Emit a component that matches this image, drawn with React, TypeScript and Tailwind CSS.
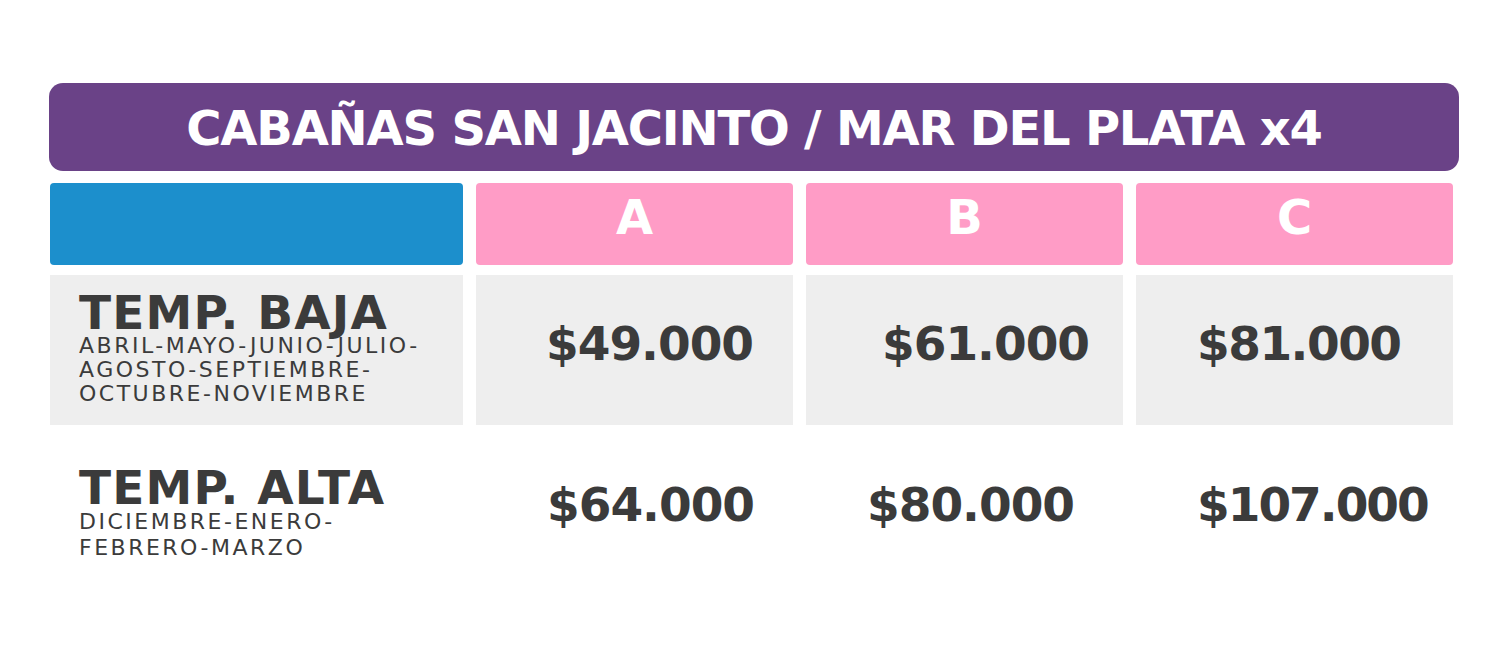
import React from "react";

const font = { fontFamily: '"DejaVu Sans", "Liberation Sans", sans-serif' };

export default function App() {
  return (
    <div className="w-[1504px] h-[645px] bg-white overflow-hidden" style={font}>
      <div className="pl-[49px] pt-[83px]">
        <div className="w-[1410px] h-[88px] bg-[#6a4287] rounded-[14px] flex items-center justify-center">
          <h1 className="text-white font-bold text-[48px] leading-none tracking-[-1.2px] pt-[1px]">
            CABAÑAS SAN JACINTO / MAR DEL PLATA x4
          </h1>
        </div>
        <div className="grid grid-cols-[413px_317px_317px_317px] gap-x-[13px] mt-[12px] ml-[1px] text-[#3b3b3b]">
          {/* header */}
          <div className="h-[82px] bg-[#1c8fcc] rounded-[4px]" />
          {["A", "B", "C"].map((l) => (
            <div key={l} className="h-[82px] bg-[#ff9cc6] rounded-[4px] flex items-center justify-center">
              <span className="text-white font-bold text-[48px] leading-none pb-[14px]">{l}</span>
            </div>
          ))}

          {/* row 1 */}
          <div className="mt-[10px] h-[150px] bg-[#eeeeee] pl-[29px] pt-[18px]">
            <div className="font-bold text-[47px] leading-[40px] tracking-[1.2px]">TEMP. BAJA</div>
            <div className="text-[22px] leading-[24px] tracking-[2.5px] mt-[1px]">
              ABRIL-MAYO-JUNIO-JULIO-
              <br />
              AGOSTO-SEPTIEMBRE-
              <br />
              OCTUBRE-NOVIEMBRE
            </div>
          </div>
          <div className="mt-[10px] h-[150px] bg-[#eeeeee] flex items-center pl-[70px] pb-[14px]">
            <span className="font-bold text-[47px] leading-none tracking-[-1px]">$49.000</span>
          </div>
          <div className="mt-[10px] h-[150px] bg-[#eeeeee] flex items-center pl-[76px] pb-[14px]">
            <span className="font-bold text-[47px] leading-none tracking-[-1px]">$61.000</span>
          </div>
          <div className="mt-[10px] h-[150px] bg-[#eeeeee] flex items-center pl-[61px] pb-[14px]">
            <span className="font-bold text-[47px] leading-none tracking-[-1.5px]">$81.000</span>
          </div>

          {/* row 2 */}
          <div className="h-[150px] pl-[29px] pt-[43px]">
            <div className="font-bold text-[47px] leading-[40px] tracking-[1.2px]">TEMP. ALTA</div>
            <div className="text-[22px] leading-[26px] tracking-[2.5px] mt-[1px]">
              DICIEMBRE-ENERO-
              <br />
              FEBRERO-MARZO
            </div>
          </div>
          <div className="h-[150px] flex items-center pl-[71px] pt-[8px]">
            <span className="font-bold text-[47px] leading-none tracking-[-1px]">$64.000</span>
          </div>
          <div className="h-[150px] flex items-center pl-[61px] pt-[8px]">
            <span className="font-bold text-[47px] leading-none tracking-[-1px]">$80.000</span>
          </div>
          <div className="h-[150px] flex items-center pl-[61px] pt-[8px]">
            <span className="font-bold text-[47px] leading-none tracking-[-2px]">$107.000</span>
          </div>
        </div>
      </div>
    </div>
  );
}
